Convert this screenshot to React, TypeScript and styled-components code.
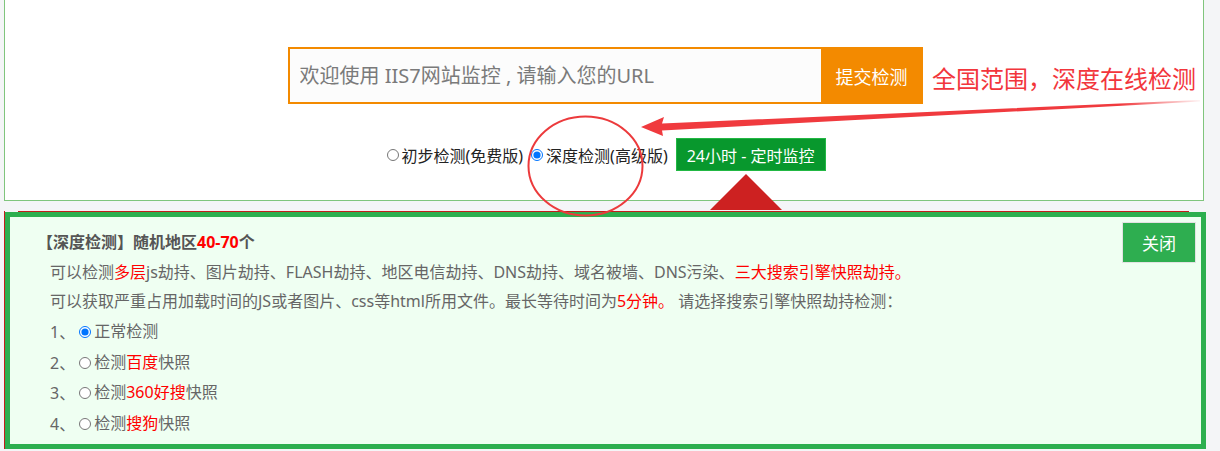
import React from 'react';
import styled, { createGlobalStyle } from 'styled-components';

const GlobalStyle = createGlobalStyle`
  html, body {
    margin: 0;
    padding: 0;
  }
  body {
    background: #f4f5f7;
    font-family: "Noto Sans", "Noto Sans CJK SC", sans-serif;
  }
`;

const Page = styled.div`
  position: relative;
  width: 1220px;
  height: 451px;
  overflow: hidden;
`;

const TopPanel = styled.div`
  box-sizing: border-box;
  width: 1200px;
  height: 201px;
  margin-left: 4px;
  padding-top: 47px;
  background: #fff;
  border: 1px solid #80c57d;
  border-top: none;
  display: flex;
  flex-direction: column;
  align-items: center;
`;

const SearchRow = styled.form`
  display: flex;
  height: 57px;
  margin: 0 0 0 2px;
`;

const UrlInput = styled.input`
  box-sizing: border-box;
  width: 533px;
  height: 57px;
  margin: 0;
  padding: 0 10px;
  border: 2px solid #f38a00;
  border-right: none;
  outline: none;
  background: #fcfcfc;
  font-family: inherit;
  font-size: 20px;
  color: #333;

  &::placeholder {
    color: #7a7a7a;
  }
`;

const SubmitButton = styled.button`
  width: 102px;
  height: 57px;
  margin: 0;
  border: none;
  background: #f38a00;
  color: #fff;
  font-family: inherit;
  font-size: 18px;
  cursor: pointer;
`;

const ModeRow = styled.div`
  display: flex;
  align-items: center;
  height: 33px;
  margin-top: 34px;
  padding-left: 4px;
  font-size: 16px;
  color: #222;
`;

const ModeLabel = styled.label`
  display: flex;
  align-items: center;
  margin-right: 8px;
  cursor: pointer;

  input {
    margin: 0 3px 0 0;
    width: 12px;
    height: 12px;
  }
`;

const MonitorButton = styled.button`
  position: relative;
  height: 33px;
  padding: 0 10px;
  border: 1px solid #22b844;
  background: #08982d;
  color: #fff;
  font-family: inherit;
  font-size: 16px;
  cursor: pointer;

  &::after {
    content: "";
    position: absolute;
    top: calc(100% + 4px);
    left: 33px;
    width: 0;
    height: 0;
    border-left: 36px solid transparent;
    border-right: 36px solid transparent;
    border-bottom: 36px solid #cd2121;
    z-index: 2;
  }
`;

const DetailPanel = styled.div`
  position: relative;
  box-sizing: border-box;
  width: 1201px;
  height: 237px;
  margin: 11px 0 0 5px;
  padding: 11px 27px 0;
  border: 5px solid #2daf4f;
  background: #effff2;
  color: #666;
  font-size: 16px;
  line-height: 29.7px;

  &::before {
    content: "";
    position: absolute;
    top: -6px;
    left: 8px;
    right: 12px;
    height: 1px;
    background: #c21c1c;
  }

  &::after {
    content: "";
    position: absolute;
    top: -6px;
    left: -6px;
    bottom: -5px;
    width: 1px;
    background: #c21c1c;
  }
`;

const CloseButton = styled.button`
  float: right;
  width: 74px;
  height: 41px;
  margin: -6px -22px 0 0;
  border: 1px solid #e2e2e2;
  background: #2eae50;
  color: #fff;
  font-family: inherit;
  font-size: 17px;
  cursor: pointer;
`;

const Title = styled.div`
  font-weight: bold;
  color: #555;
`;

const Line = styled.div`
  padding-left: 13px;
  white-space: nowrap;
`;

const Red = styled.span<{ $bold?: boolean }>`
  color: #f00;
  font-weight: ${(p) => (p.$bold ? 'bold' : 'normal')};
`;

const Option = styled.label`
  display: inline-flex;
  align-items: center;
  cursor: pointer;

  input {
    margin: 0 3px 0 4px;
    width: 12px;
    height: 12px;
  }
`;

const Overlay = styled.svg`
  position: absolute;
  left: 0;
  top: 0;
  pointer-events: none;
  z-index: 3;
`;

const Note = styled.span`
  position: absolute;
  left: 932px;
  top: 62px;
  color: #f2363c;
  font-size: 24px;
  line-height: 34px;
  white-space: nowrap;
  z-index: 3;
`;

const engines: { label: React.ReactNode; checked?: boolean }[] = [
  { label: '正常检测', checked: true },
  { label: <>检测<Red>百度</Red>快照</> },
  { label: <>检测<Red>360好搜</Red>快照</> },
  { label: <>检测<Red>搜狗</Red>快照</> },
];

export default function App() {
  return (
    <Page>
      <GlobalStyle />
      <TopPanel>
        <SearchRow onSubmit={(e) => e.preventDefault()}>
          <UrlInput placeholder="欢迎使用 IIS7网站监控 , 请输入您的URL" />
          <SubmitButton type="submit">提交检测</SubmitButton>
        </SearchRow>
        <ModeRow>
          <ModeLabel>
            <input type="radio" name="mode" />
            初步检测(免费版)
          </ModeLabel>
          <ModeLabel>
            <input type="radio" name="mode" defaultChecked />
            深度检测(高级版)
          </ModeLabel>
          <MonitorButton type="button">24小时 - 定时监控</MonitorButton>
        </ModeRow>
      </TopPanel>

      <DetailPanel>
        <CloseButton type="button">关闭</CloseButton>
        <Title>
          【深度检测】随机地区<Red $bold>40-70</Red>个
        </Title>
        <Line>
          可以检测<Red>多层</Red>js劫持、图片劫持、FLASH劫持、地区电信劫持、DNS劫持、域名被墙、DNS污染、
          <Red>三大搜索引擎快照劫持。</Red>
        </Line>
        <Line>
          可以获取严重占用加载时间的JS或者图片、css等html所用文件。最长等待时间为<Red>5分钟。</Red> 请选择搜索引擎快照劫持检测：
        </Line>
        {engines.map((item, i) => (
          <Line key={i}>
            {i + 1}、
            <Option>
              <input type="radio" name="engine" defaultChecked={item.checked} />
              {item.label}
            </Option>
          </Line>
        ))}
      </DetailPanel>

      <Note>全国范围，深度在线检测</Note>
      <Overlay width="1220" height="451" viewBox="0 0 1220 451">
        <defs>
          <linearGradient id="arrowFade" x1="641" y1="0" x2="1205" y2="0" gradientUnits="userSpaceOnUse">
            <stop offset="0" stopColor="#f03a3e" />
            <stop offset="0.85" stopColor="#f03a3e" />
            <stop offset="1" stopColor="#f03a3e" stopOpacity="0" />
          </linearGradient>
        </defs>
        <path
          d="M641 127 L664 117 L662 123.5 L1200 100 L1200 101.5 L662 130.5 L663 136 Z"
          fill="url(#arrowFade)"
        />
        <ellipse cx="585.5" cy="166" rx="57" ry="49.5" fill="none" stroke="#ec3a3c" strokeWidth="2" />
      </Overlay>
    </Page>
  );
}
